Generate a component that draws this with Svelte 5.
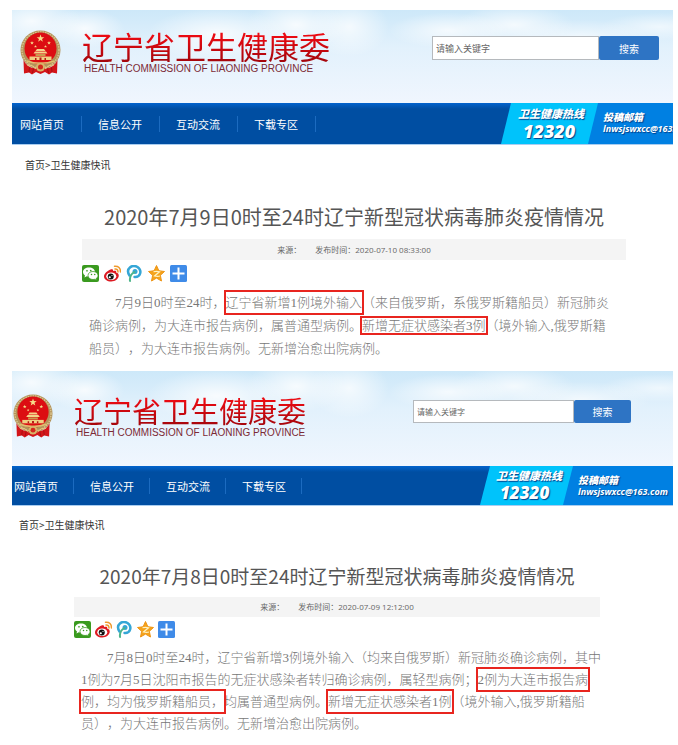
<script>
	const menu = ['网站首页', '信息公开', '互动交流', '下载专区'];

	// text runs: a plain string, or { box } for a marked phrase
	const reports = [
		{
			id: 'first',
			title: '2020年7月9日0时至24时辽宁新型冠状病毒肺炎疫情情况',
			time: '2020-07-10 08:33:00',
			lines: [
				['7月9日0时至24时，', { box: '辽宁省新增1例境外输入', big: true }, '（来自俄罗斯，系俄罗斯籍船员）新冠肺炎'],
				['确诊病例，为大连市报告病例，属普通型病例。', { box: '新增无症状感染者3例' }, '（境外输入,俄罗斯籍'],
				['船员），为大连市报告病例。无新增治愈出院病例。']
			]
		},
		{
			id: 'second',
			title: '2020年7月8日0时至24时辽宁新型冠状病毒肺炎疫情情况',
			time: '2020-07-09 12:12:00',
			lines: [
				['7月8日0时至24时，辽宁省新增3例境外输入（均来自俄罗斯）新冠肺炎确诊病例，其中'],
				['1例为7月5日沈阳市报告的无症状感染者转归确诊病例，属轻型病例；', { box: '2例为大连市报告病', big: true }],
				[{ box: '例，均为俄罗斯籍船员，', big: true }, '均属普通型病例。', { box: '新增无症状感染者1例', big: true }, '（境外输入,俄罗斯籍船'],
				['员），为大连市报告病例。无新增治愈出院病例。']
			]
		}
	];
</script>

{#snippet star(x, y, r)}
	<polygon
		transform="translate({x} {y}) scale({r})"
		points="0,-1 .24,-.32 .95,-.31 .38,.12 .59,.81 0,.4 -.59,.81 -.38,.12 -.95,-.31 -.24,-.32"
		fill="#f7dc8a"
	/>
{/snippet}

{#snippet emblem()}
	<svg class="emblem" viewBox="0 0 82 90" aria-hidden="true">
		<ellipse cx="41" cy="40" rx="40" ry="39" fill="#b3925a" />
		<ellipse cx="41" cy="40" rx="37" ry="36" fill="none" stroke="#d9c48e" stroke-width="3" stroke-dasharray="3 2" />
		<path d="M7 60 Q13 74 30 77 L41 72 52 77 Q69 74 75 60 L74 87 64 85 58 89 50 84 41 88 32 84 24 89 18 85 8 87Z" fill="#d3151a" />
		<circle cx="41" cy="37" r="32" fill="#dc0d12" />
		{@render star(41, 17, 8)}
		{@render star(24, 26, 4)}
		{@render star(58, 26, 4)}
		{@render star(31, 33, 3)}
		{@render star(51, 33, 3)}
		<path d="M31 42 L34 38 H48 L51 42Z M27 47 L30 43 H52 L55 47Z" fill="#f3d489" />
		<path d="M31 48 H51 V52 H31Z" fill="#c99b4f" />
		<path d="M19 53 H63 V60 H19Z" fill="#efcf83" />
		<path d="M39 55 H43 V60 H39Z M30 56 H33 V60 H30Z M49 56 H52 V60 H49Z" fill="#b51a16" />
		<path d="M13 62 Q41 71 69 62" fill="none" stroke="#e2bd70" stroke-width="3" />
		<circle cx="41" cy="74" r="9" fill="#d8b469" />
		<circle cx="41" cy="74" r="5" fill="#d3291c" />
		<path d="M14 70 Q25 68 32 78 M68 70 Q57 68 50 78" fill="none" stroke="#e8c57c" stroke-width="2" />
		<path d="M19 75 L18 84 M63 75 L64 84 M27 77 L25 86 M55 77 L57 86" stroke="#a80f13" stroke-width="2" />
	</svg>
{/snippet}

<main>
	{#each reports as report}
		<section class={report.id}>
			<header>
				<div class="brand">
					{@render emblem()}
					<div>
						<div class="name">辽宁省卫生健康委</div>
						<div class="sub">HEALTH COMMISSION OF LIAONING PROVINCE</div>
					</div>
				</div>
				<form onsubmit={(e) => e.preventDefault()}>
					<input type="text" placeholder="请输入关键字" aria-label="请输入关键字" />
					<button>搜索</button>
				</form>
			</header>

			<nav>
				<ul>
					{#each menu as item}
						<li><a href="#{report.id}">{item}</a></li>
					{/each}
				</ul>
				<div class="contact">
					<div class="hotline">
						<b>卫生健康热线</b>
						<strong>12320</strong>
					</div>
					<div class="mail">
						<b>投稿邮箱</b>
						<span>lnwsjswxcc@163.com</span>
					</div>
				</div>
			</nav>

			<div class="crumb"><a href="#{report.id}">首页</a>&gt;<a href="#{report.id}">卫生健康快讯</a></div>

			<article>
				<h1>{report.title}</h1>
				<div class="meta"><span>来源：</span><span>发布时间：{report.time}</span></div>
				<div class="share">
					<button aria-label="微信">
						<svg viewBox="0 0 34 34">
							<rect width="34" height="34" rx="4" fill="#3a9a1f" />
							<path d="M14 5C7 5 2 9 2 14c0 3 1.600 5.300 4 6.800L5 25l4.500-2.300c1.300.3 2.800.5 4.500.5 7 0 12-4 12-9s-5-9.200-12-9.200Z" fill="#fff" />
							<path d="M22 13c-6 0-10 3.500-10 8s4 8 10 8c1.200 0 2.300-.2 3.400-.4l3.800 2-1-3.400C30.700 25.600 32 23.500 32 21c0-4.500-4-8-10-8Z" fill="#fff" stroke="#3a9a1f" stroke-width="1.500" />
							<circle cx="10" cy="11.500" r="1.700" fill="#3a9a1f" />
							<circle cx="17.500" cy="11" r="1.700" fill="#3a9a1f" />
							<circle cx="19" cy="19" r="1.500" fill="#3a9a1f" />
							<circle cx="25.500" cy="19" r="1.500" fill="#3a9a1f" />
						</svg>
					</button>
					<button aria-label="微博">
						<svg viewBox="0 0 34 34">
							<path d="M13 9c3-1.500 6-.5 5 3 4.600-1.600 7.600-.6 6.200 3.200 3.600 1 5.300 2.800 5.300 6C29.500 28 22.500 33 14.500 33S0 29 0 22.500C0 17 7 11.500 13 9Z" fill="#dd1a22" />
							<ellipse cx="14.500" cy="22.500" rx="10" ry="7.500" fill="#fff" />
							<circle cx="13.500" cy="23" r="6" fill="#111" />
							<circle cx="11.500" cy="24.500" r="2.200" fill="#fff" />
							<circle cx="16" cy="21" r="1.200" fill="#fff" />
							<path d="M22 8q6-.5 6 6M21 2.500q12-1 12 11.500" fill="none" stroke="#f0992b" stroke-width="3" stroke-linecap="round" />
						</svg>
					</button>
					<button aria-label="腾讯微博">
						<svg viewBox="0 0 34 34">
							<path d="M7 21C-2 7 13-2 23 4c10 7 6 21-6 20" fill="none" stroke="#35a6d6" stroke-width="5" stroke-linecap="round" />
							<circle cx="18" cy="13" r="5" fill="#35a6d6" />
							<path d="M17 14C10 18 7 24 8 32" fill="none" stroke="#4db58a" stroke-width="4" stroke-linecap="round" />
						</svg>
					</button>
					<button aria-label="QQ空间">
						<svg viewBox="0 0 34 34">
							<path d="M17 1l4.800 10.500L33 13l-8.300 7.600L27 32l-10-5.800L7 32l2.300-11.400L1 13l11.200-1.500Z" fill="#f5a31b" stroke="#ee9414" stroke-width="2" stroke-linejoin="round" />
							<path d="M11 13.500q6-1.500 12 0L13 22q6 1.500 11 0" fill="none" stroke="#fff3c4" stroke-width="2.500" />
						</svg>
					</button>
					<button aria-label="更多">
						<svg viewBox="0 0 34 34">
							<rect width="34" height="34" rx="3" fill="#3f8be8" />
							<path d="M17 5V29M5 17H29" stroke="#fff" stroke-width="4" />
						</svg>
					</button>
				</div>
				<p>
					{#each report.lines as line}
						<span class="line">{#each line as run}{#if run.box}<mark class:big={run.big}>{run.box}</mark>{:else}{run}{/if}{/each}</span>
					{/each}
				</p>
			</article>
		</section>
	{/each}
</main>

<style>
:global(body){
	margin:0;
	background:#fff;
}
main{
	padding:10px 5px 0 12px;
	font-family:"Noto Sans CJK SC", "Open Sans", sans-serif;
	text-spacing-trim:space-all;
}
section{
	padding-bottom:11px;
}
header{
	display:flex;
	justify-content:space-between;
	align-items:flex-start;
	box-sizing:border-box;
	height:93px;
	padding:20px 14px 0 8px;
	background:
		radial-gradient(ellipse 50px 26px at 3% 12%, #fffc, #fff0),
		radial-gradient(ellipse 40px 20px at 11% 20%, #fffc, #fff0),
		radial-gradient(ellipse 70px 26px at 31% 26%, #fffc, #fff0),
		radial-gradient(ellipse 50px 26px at 43% 16%, #fffc, #fff0),
		radial-gradient(ellipse 40px 30px at 51% 18%, #fffb, #fff0),
		radial-gradient(ellipse 60px 18px at 66% 22%, #fffb, #fff0),
		radial-gradient(ellipse 60px 20px at 76% 16%, #fffb, #fff0),
		radial-gradient(ellipse 70px 18px at 86% 30%, #fff9, #fff0),
		radial-gradient(ellipse 60px 14px at 98% 18%, #fff9, #fff0),
		linear-gradient(#cde8f9, #e2f1fc 40%, #f0f6fe);
}
.brand{
	display:flex;
	gap:21px;
}
.emblem{
	width:41px;
	height:45px;
}
.name{
	font-size:31px;
	line-height:32px;
	white-space:nowrap;
	color:transparent;
	background:linear-gradient(#ea0a12 20%, #a3060c);
	background-clip:text;
}
.sub{
	padding-left:2px;
	font:10px/13px "Liberation Sans", sans-serif;
	white-space:nowrap;
	color:#7c2a35;
}
form{
	display:flex;
	margin-top:6px;
	height:24px;
}
input{
	box-sizing:border-box;
	width:167px;
	padding:0 3px;
	border:1px solid #b5b9bd;
	background:#fff;
	font:9px "Noto Sans CJK SC", sans-serif;
}
input::placeholder{
	color:#666;
}
form button{
	width:60px;
	padding:0;
	border:0;
	border-radius:2px;
	background:#2e74c4;
	color:#fff;
	font:10px "Noto Sans CJK SC", sans-serif;
}
nav{
	display:flex;
	justify-content:space-between;
	height:41px;
	background:linear-gradient(#0263cd, #004ea2 6px);
	box-shadow:0 1px #a9cdf0;
}
ul{
	display:flex;
	align-items:center;
	margin:0;
	padding:0;
	list-style:none;
}
li{
	box-sizing:border-box;
	width:78px;
	padding-left:16px;
	border-right:1px solid #1c6bc0;
	font-size:11px;
	line-height:16px;
	white-space:nowrap;
}
li:first-child{
	width:70px;
	padding-left:8px;
}
a{
	color:inherit;
	text-decoration:none;
}
li a{
	color:#fff;
}
.contact{
	display:flex;
	width:172px;
	overflow:hidden;
	background:linear-gradient(90deg, #0000 50px, #0080e2 50px);
	color:#fff;
	font-family:"Noto Sans", "Noto Sans CJK SC", sans-serif;
	font-style:italic;
	font-weight:bold;
	white-space:nowrap;
	text-shadow:1px 1px 1px #00408a;
}
.hotline{
	box-sizing:border-box;
	flex:none;
	width:97px;
	padding:3px 0 0 17px;
	background:#00c3fb;
	clip-path:polygon(10px 0, 100% 0, calc(100% - 10px) 100%, 0 100%);
}
.hotline b,
.hotline strong{
	display:block;
	font-size:11px;
	line-height:16px;
}
.hotline strong{
	padding-left:5px;
	font-size:18px;
	line-height:18px;
}
.mail{
	padding:8px 0 0 5px;
	font-size:9px;
	line-height:12px;
}
.mail b{
	display:block;
	font-size:10px;
}
.crumb{
	padding:11px 13px 0;
	font-size:10px;
	line-height:20px;
	color:#333;
}
article{
	margin:27px 47px 0 70px;
}
h1{
	margin:0 0 7px;
	font-size:20px;
	font-weight:normal;
	line-height:30px;
	text-align:center;
	white-space:nowrap;
	color:#555;
}
.meta{
	display:flex;
	justify-content:center;
	gap:14px;
	background:#f4f4f4;
	font-family:"Open Sans", "Noto Sans CJK SC", sans-serif;
	font-size:8px;
	line-height:21px;
	color:#666;
}
.share{
	display:flex;
	gap:5px;
	margin:5px 0 9px;
}
.share button{
	width:17px;
	height:17px;
	padding:0;
	border:0;
	background:none;
}
.share svg{
	display:block;
	width:100%;
	height:100%;
}
p{
	margin:0;
	padding-left:7px;
	font-family:"Liberation Serif", "Noto Sans CJK SC", serif;
	font-size:13px;
	font-weight:300;
	line-height:23px;
	white-space:nowrap;
	color:#777;
}
.line{
	display:block;
}
.line:first-child{
	padding-left:2em;
}
mark{
	background:none;
	color:inherit;
	outline:2px solid #e8251f;
}
mark.big{
	padding:3px 0;
}

/* the older report is laid out slightly smaller */
.second header{
	height:95px;
	padding:23px 42px 0 1px;
}
.second .emblem{
	width:40px;
	height:44px;
}
.second .name{
	font-size:29px;
}
.second input{
	width:161px;
	font-size:8px;
}
.second form button{
	width:57px;
}
.second form{
	height:23px;
}
.second nav{
	height:39px;
}
.second li{
	width:76px;
}
.second li:first-child{
	width:62px;
	padding-left:2px;
}
.second .contact{
	width:193px;
}
.second .hotline{
	width:93px;
	padding:2px 0 0 16px;
}
.second .hotline strong{
	padding-left:4px;
	font-size:17px;
}
.second .crumb{
	padding:10px 7px 0;
}
.second article{
	margin:26px 73px 0 62px;
}
.second h1{
	margin-bottom:6px;
	font-size:19px;
}
.second .meta{
	line-height:20px;
}
.second .share{
	gap:4px;
	margin-top:4px;
}
.second p{
	line-height:22px;
}
</style>
